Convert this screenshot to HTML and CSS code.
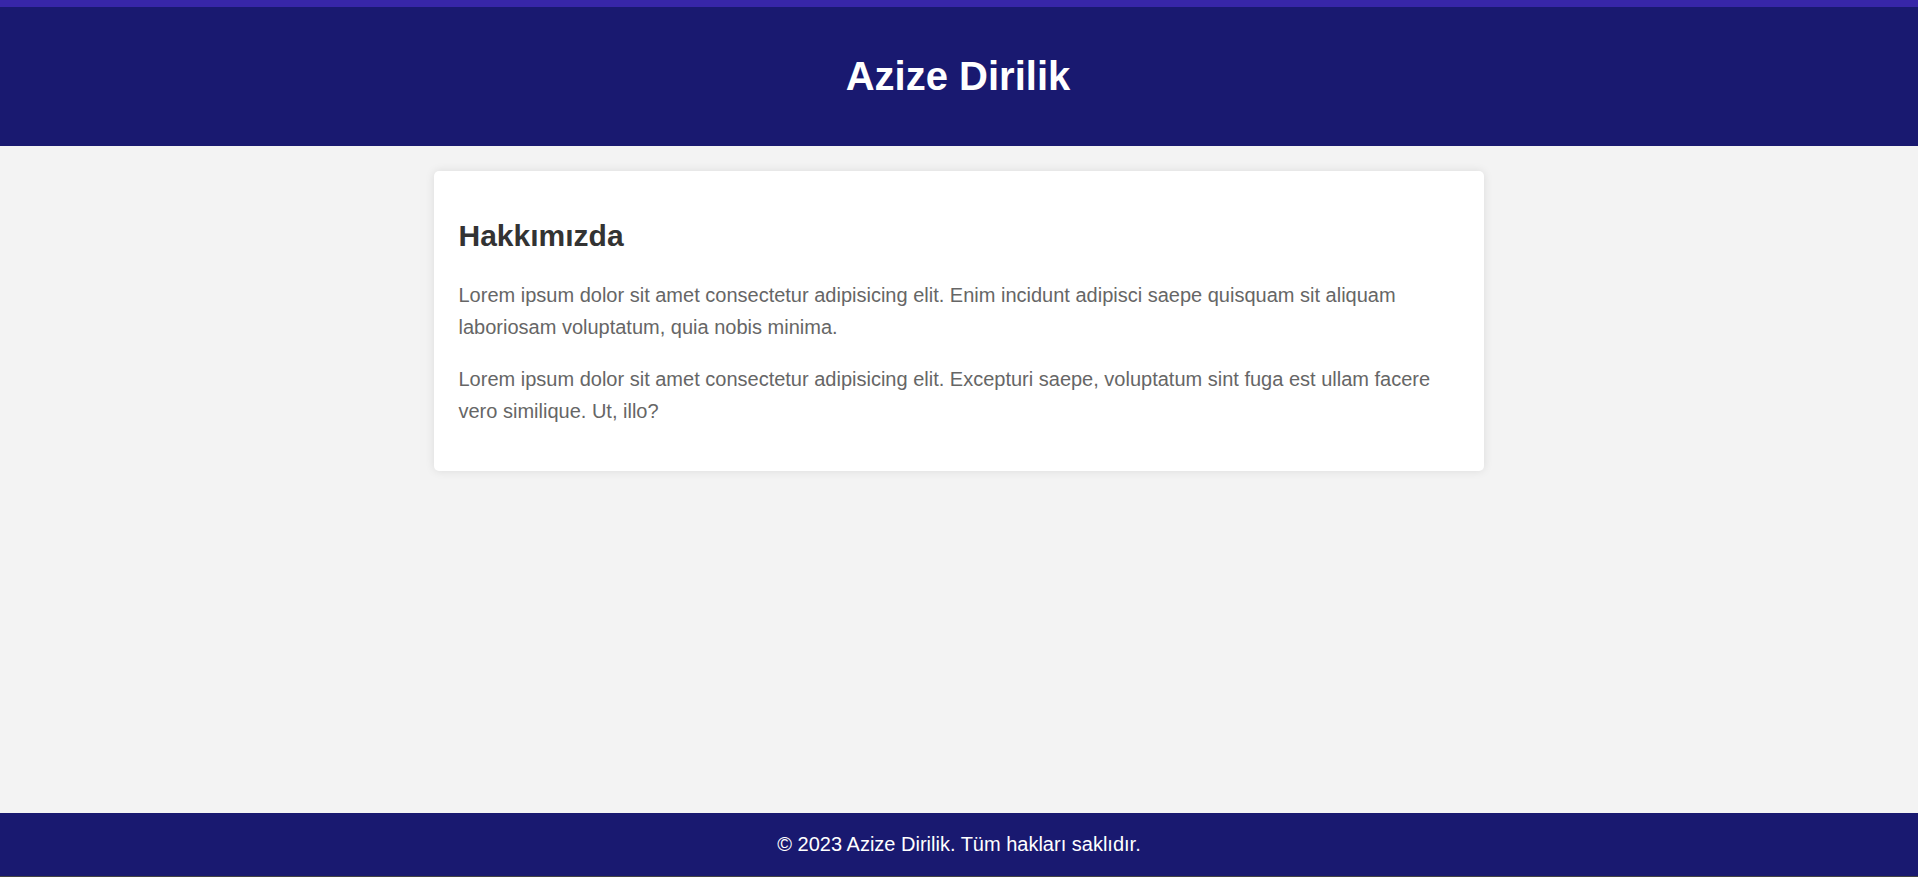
FILE: index.html
```html
<!DOCTYPE html>
<html lang="tr">
<head>
<meta charset="utf-8">
<title>Azize Dirilik</title>
<link rel="stylesheet" href="styles.css">
</head>
<body>
<header class="site-header">
  <h1 class="site-title">Azize Dirilik</h1>
</header>
<main class="content">
  <section class="card">
    <h2 class="card-title">Hakkımızda</h2>
    <p class="card-text">Lorem ipsum dolor sit amet consectetur adipisicing elit. Enim incidunt adipisci saepe quisquam sit aliquam laboriosam voluptatum, quia nobis minima.</p>
    <p class="card-text">Lorem ipsum dolor sit amet consectetur adipisicing elit. Excepturi saepe, voluptatum sint fuga est ullam facere vero similique. Ut, illo?</p>
  </section>
</main>
<footer class="site-footer">
  <p class="footer-text">© 2023 Azize Dirilik. Tüm hakları saklıdır.</p>
</footer>
</body>
</html>
```

FILE: styles.css
```css
* { box-sizing: border-box; }
html, body { margin: 0; padding: 0; }
body {
  font-family: "Liberation Sans", Arial, sans-serif;
  font-size: 20px;
  background: #f3f3f3;
  min-height: 100vh;
  display: flex;
  flex-direction: column;
}
.site-header {
  background: #191970;
  border-top: 7px solid #3726a8;
  padding: 20px 22px 20px 20px;
  text-align: center;
}
.site-title {
  margin: 26.3px 0;
  font-size: 40px;
  font-weight: bold;
  color: #fff;
  line-height: 46px;
}
.content {
  flex: 1;
  display: flex;
  justify-content: center;
  padding: 25px 1px 0 0;
}
.card {
  width: 1050px;
  align-self: flex-start;
  background: #fff;
  border-radius: 5px;
  box-shadow: 0 0 10px rgba(0,0,0,0.1);
  padding: 24px 25px;
}
.card-title {
  margin: 24.9px 0;
  font-size: 30px;
  line-height: 34.5px;
  font-weight: bold;
  color: #333;
}
.card-text {
  margin: 20px 0;
  line-height: 32px;
  color: #666;
}
.site-footer {
  background: #191970;
  border-bottom: 1px solid #444;
  padding: 20px;
  text-align: center;
}
.footer-text {
  margin: 0;
  color: #fff;
  line-height: 23px;
}
```
